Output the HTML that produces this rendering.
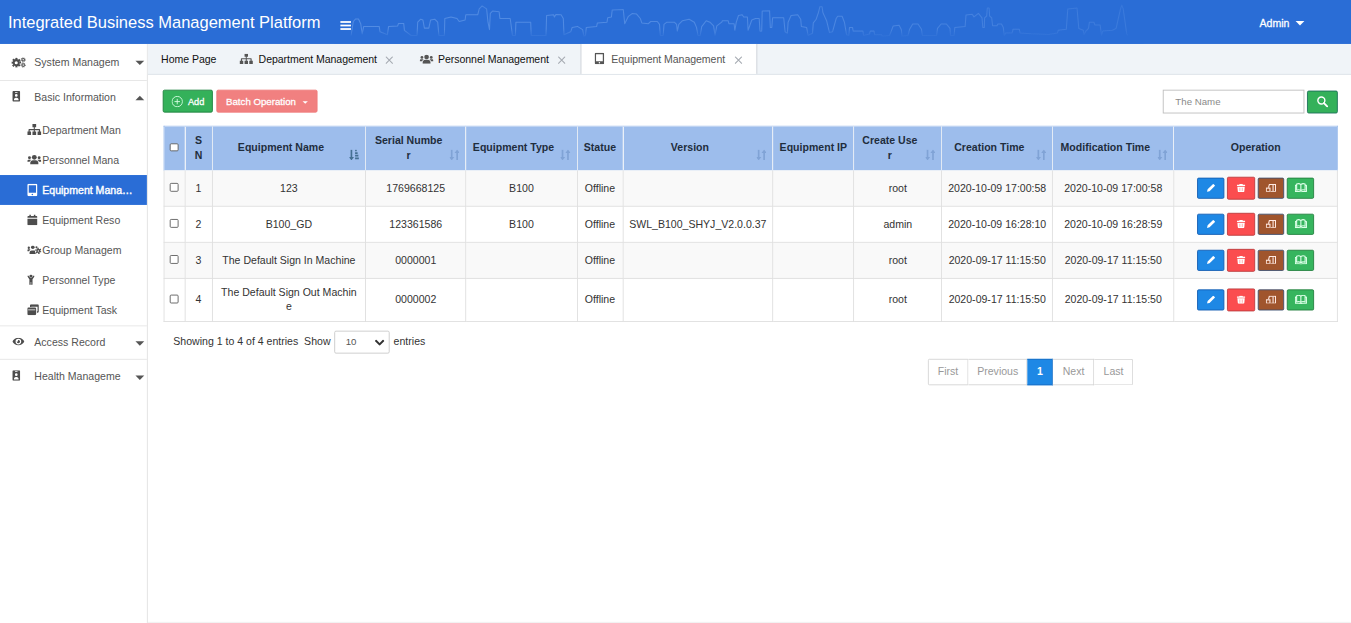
<!DOCTYPE html>
<html>
<head>
<meta charset="utf-8">
<title>Integrated Business Management Platform</title>
<style>
*{box-sizing:border-box;margin:0;padding:0}
html,body{width:1351px;height:623px;overflow:hidden;background:#fff}
#root{position:absolute;left:0;top:0;width:1536px;height:709px;transform:scale(0.87956);transform-origin:0 0;font-family:"Liberation Sans",sans-serif;font-size:12px;color:#333;overflow:hidden;background:#fff}
#hdr{position:absolute;left:0;top:0;width:1536px;height:50px;background:#2a6dd6;overflow:hidden}
#hdr .title{position:absolute;left:9px;top:13.5px;font-size:18.75px;color:#fff;line-height:24px;white-space:nowrap}
#hdr .burger{position:absolute;left:387px;top:24px;width:12px}
#hdr .burger i{display:block;height:2.4px;background:#fff;margin-bottom:1.5px;width:12px}
#hdr .admin{position:absolute;left:1432px;top:18.8px;color:#fff;font-size:12px;line-height:16px;-webkit-text-stroke:0.3px #fff}
#hdr .caret{position:absolute;left:1473px;top:24.2px;width:0;height:0;border-left:5.4px solid transparent;border-right:5.4px solid transparent;border-top:5px solid #fff}
#side{position:absolute;left:0;top:50px;width:168px;height:659px;background:#fff;border-right:1px solid #e0e0e0}
.m1{position:absolute;left:0;width:167px;height:41px;border-bottom:1px solid #e4e4e4;color:#555}
.m1 span{position:absolute;left:39px;top:13px;line-height:16px;white-space:nowrap;font-size:12px}
.m1 svg{position:absolute;left:13px;top:13px}
.m1 b.c{position:absolute;left:154px;width:0;height:0;border-left:5px solid transparent;border-right:5px solid transparent}
.m1 b.dn{top:19px;border-top:5.5px solid #555}
.m1 b.up{top:17px;border-bottom:5.5px solid #555}
.m2{position:absolute;left:0;width:167px;height:34px;color:#555}
.m2 span{position:absolute;left:48px;top:10px;line-height:16px;white-space:nowrap;font-size:12px}
.m2 svg{position:absolute;left:30px;top:10px}
.ic{position:absolute;overflow:visible;z-index:3}
.m2.act{background:#2a6dd6;color:#fff;height:34.3px;-webkit-text-stroke:0.45px #fff}
#tabs{position:absolute;left:168px;top:50px;width:1368px;height:35px;background:#f0f4f8;border-bottom:1px solid #dde2e8}
.tab{position:absolute;top:0;height:34px;font-size:12px;color:#111;white-space:nowrap}
.tt{letter-spacing:-0.07px;position:absolute;top:10.3px;line-height:16px;font-size:12px;color:#111;white-space:nowrap;z-index:3}
.tab svg{position:absolute}
.tab.on{background:#fff;border-left:1px solid #c6ccd4;border-right:1px solid #c6ccd4;height:34px;color:#555}
.btn{position:absolute;border-radius:2px;-webkit-text-stroke:0.3px #fff;color:#fff;white-space:nowrap}
table{position:absolute;left:186px;top:143px;width:1335px;border-collapse:collapse;table-layout:fixed;font-size:12px}
th,td{border:1px solid #dedede;text-align:center;vertical-align:middle;padding:0 4px;line-height:17.14px;color:#333;overflow:hidden;white-space:nowrap}
th{padding-top:0.7px;background:#9dbdec;font-weight:bold;color:#1f2d3d;height:50.4px;position:relative;border-color:#dde6f3;border-top-color:#9dbdec}
td{height:41px}
th:first-child{border-left-color:#9dbdec}
th:last-child{border-right-color:#9dbdec}
tr.o td{background:#f9f9f9}
tr.e td{background:#fff}
.cb{display:inline-block;width:9.8px;height:9.8px;border:1px solid #5a5a5a;border-radius:1.6px;background:#fff;vertical-align:middle;position:relative;top:-1.8px;left:-0.4px}
.srt{position:absolute;right:6.8px;bottom:11px;width:11.3px;height:12.4px}
.ops{display:flex;justify-content:center;align-items:center;gap:3.3px;position:relative;top:-0.4px}
.ob{display:block;width:30px;height:23.5px;border-radius:1.8px;position:relative;border:1px solid transparent;flex:none}
.ob svg{position:absolute;left:50%;top:50%}
#info{position:absolute;left:197px;top:380px;font-size:12px;color:#333;line-height:16px;white-space:pre}
#sel{position:absolute;left:380px;top:376.4px;width:63px;height:26px;border:1px solid #c8c8c8;border-radius:2px;background:#fff}
#sel span{position:absolute;left:12px;top:4.4px;font-size:11px;color:#555;line-height:13px}
#ent2{position:absolute;left:447.5px;top:380px;font-size:12px;color:#333;line-height:16px}
#pg{position:absolute;left:1055px;top:408px;height:29.5px;display:flex;font-size:12px;color:#999}
#pg div{height:29.5px;border:1px solid #d4d4d4;border-left:none;line-height:27.5px;text-align:center;background:#fff}
#pg div:first-child{border-left:1px solid #d4d4d4;border-radius:1.5px 0 0 1.5px}
#pg div:last-child{border-radius:0 1.5px 1.5px 0}
#pg div.on{background:#1e88e5;border-color:#1a6fc4;color:#fff;font-weight:bold}
</style>
</head>
<body>
<div id="root">
<svg width="0" height="0" style="position:absolute">
<defs>
<symbol id="i-cogs" viewBox="0 0 16.4 11.8">
  <g fill="none" stroke="currentColor">
    <circle cx="5.4" cy="6.2" r="2.9" stroke-width="2.3"/>
    <circle cx="5.4" cy="6.2" r="4.6" stroke-width="1.8" stroke-dasharray="2.2 1.413" transform="rotate(-18 5.4 6.2)"/>
    <circle cx="13.2" cy="2.9" r="1.45" stroke-width="1.15"/>
    <circle cx="13.2" cy="2.9" r="2.4" stroke-width="1" stroke-dasharray="0.95 0.935"/>
    <circle cx="13.2" cy="8.9" r="1.45" stroke-width="1.15"/>
    <circle cx="13.2" cy="8.9" r="2.4" stroke-width="1" stroke-dasharray="0.95 0.935"/>
  </g>
</symbol>
<symbol id="i-badge" viewBox="0 0 9 12">
  <path fill="currentColor" fill-rule="evenodd" d="M1.3 0h6.4a1.3 1.3 0 0 1 1.3 1.3v9.4a1.3 1.3 0 0 1-1.3 1.3h-6.4a1.3 1.3 0 0 1-1.3-1.3v-9.4a1.3 1.3 0 0 1 1.3-1.3zM3.1 1.1v0.9h2.8v-0.9zM4.5 3.5a1.55 1.55 0 1 0 0 3.1a1.55 1.55 0 0 0 0-3.1zM1.9 10.4h5.2v-0.7c0-1.3-1-2.2-2.1-2.2h-1c-1.1 0-2.1 0.9-2.1 2.2z"/>
</symbol>
<symbol id="i-sitemap" viewBox="0 0 16 12.6">
  <path fill="currentColor" d="M5.9 0h4.2v3.7h-1.5v1.9h5.2a0.8 0.8 0 0 1 0.8 0.8v2.2h1.4v4h-4.3v-4h1.5v-1.6h-4.6v1.6h1.5v4h-4.2v-4h1.5v-1.6h-4.6v1.6h1.5v4h-4.3v-4h1.4v-2.2a0.8 0.8 0 0 1 0.8-0.8h5.2v-1.9h-1.5z"/>
</symbol>
<symbol id="i-users" viewBox="0 0 16 11">
  <g fill="currentColor">
    <circle cx="8" cy="2.9" r="2.75"/>
    <path d="M3.4 11v-1.6c0-1.9 1.5-3.1 3-3.1h3.2c1.5 0 3 1.2 3 3.1v1.6z"/>
    <circle cx="2.5" cy="3.4" r="1.65"/>
    <circle cx="13.5" cy="3.4" r="1.65"/>
    <path d="M0 7.9v-0.8c0-1 0.8-1.6 1.6-1.6h1.7c0.5 0 0.9 0.2 1.2 0.5c-1 0.5-1.6 1.2-1.8 1.9z"/>
    <path d="M16 7.9v-0.8c0-1-0.8-1.6-1.6-1.6h-1.7c-0.5 0-0.9 0.2-1.2 0.5c1 0.5 1.6 1.2 1.8 1.9z"/>
  </g>
</symbol>
<symbol id="i-tablet" viewBox="0 0 11.6 14.1">
  <path fill="currentColor" fill-rule="evenodd" d="M1.6 0h8.4a1.6 1.6 0 0 1 1.6 1.6v10.9a1.6 1.6 0 0 1-1.6 1.6h-8.4a1.6 1.6 0 0 1-1.6-1.6v-10.9a1.6 1.6 0 0 1 1.6-1.6zM1.7 1.7v8.5h8.2v-8.5zM5.8 11.2a0.9 0.9 0 1 0 0 1.8a0.9 0.9 0 0 0 0-1.8z"/>
</symbol>
<symbol id="i-cal" viewBox="0 0 11.6 12.2">
  <path fill="currentColor" d="M2.4 0h1.7v1.6h3.4v-1.6h1.7v1.6h1.3a1.1 1.1 0 0 1 1.1 1.1v1h-11.6v-1a1.1 1.1 0 0 1 1.1-1.1h1.3zM0 4.6h11.6v6.5a1.1 1.1 0 0 1-1.1 1.1h-9.400000000000001a1.1 1.1 0 0 1-1.1-1.1z"/>
</symbol>
<symbol id="i-ucog" viewBox="0 0 16 9.8">
  <g fill="currentColor">
    <circle cx="6.3" cy="2.1" r="2.05"/>
    <path d="M2.6 9.8v-1.5c0-1.6 1.2-2.6 2.5-2.6h2.4c0.6 0 1.1 0.2 1.5 0.5c-0.4 1.2-0.1 2.6 1 3.6z"/>
    <circle cx="1.7" cy="2.7" r="1.35"/>
    <path d="M0 6.7v-0.9c0-0.8 0.6-1.3 1.3-1.3h1.2c0.4 0 0.7 0.2 1 0.4c-0.8 0.4-1.3 1-1.5 1.8z"/>
    <circle cx="10.5" cy="2.2" r="1.2"/>
  </g>
  <g fill="none" stroke="currentColor">
    <circle cx="12.6" cy="6.3" r="1.6" stroke-width="1.6"/>
    <circle cx="12.6" cy="6.3" r="2.9" stroke-width="1.4" stroke-dasharray="1.6 1.437"/>
  </g>
</symbol>
<symbol id="i-child" viewBox="0 0 8.4 12.3">
  <g fill="currentColor">
    <circle cx="4.2" cy="1.75" r="1.75"/>
    <path d="M0.2 1.7a0.8 0.8 0 0 1 1.2-0.2l2 2.4h1.6l2-2.4a0.8 0.8 0 0 1 1.2 1l-2.2 2.9v6.1a0.8 0.8 0 0 1-1.5 0v-3h-0.6v3a0.8 0.8 0 0 1-1.5 0v-6.1l-2.2-2.9a0.8 0.8 0 0 1 0-0.8z"/>
  </g>
</symbol>
<symbol id="i-restore" viewBox="0 0 13.2 12.4">
  <path fill="currentColor" fill-rule="evenodd" d="M4.4 0h7.5a1.3 1.3 0 0 1 1.3 1.3v6.900000000000001a1.3 1.3 0 0 1-1.3 1.3h-0.9v-1.5h0.7v-5.3h-7.1v0.2h-1.5v-1.6a1.3 1.3 0 0 1 1.3-1.3zM1.3 3.6h7.5a1.3 1.3 0 0 1 1.3 1.3v6.2a1.3 1.3 0 0 1-1.3 1.3h-7.5a1.3 1.3 0 0 1-1.3-1.3v-6.2a1.3 1.3 0 0 1 1.3-1.3zM1 5.9v0.9h8.1v-0.9z"/>
</symbol>
<symbol id="i-eye" viewBox="0 0 13.8 8.8">
  <path fill="currentColor" fill-rule="evenodd" d="M0 4.4c1.5-2.7 4-4.4 6.9-4.4s5.4 1.7 6.900000000000001 4.4c-1.5 2.7-4 4.4-6.9 4.4s-5.4-1.7-6.9-4.4zM6.9 1.2a3.2 3.2 0 1 0 0 6.4a3.2 3.2 0 0 0 0-6.4zM6.9 2.5a1.9 1.9 0 1 1-1.9 1.9c0.9 0.3 1.7-0.5 1.4-1.700000000000001c0.15-0.1 0.3-0.2 0.5-0.2z"/>
</symbol>
<symbol id="i-sort" viewBox="0 0 11.3 12.4">
  <path fill="currentColor" d="M1.6 0h1.9v8.4h2l-2.95 4l-2.95-4h2zM7.8 12.4h1.9v-8.4h2l-2.95-4l-2.95 4h2z"/>
</symbol>
<symbol id="i-sorta" viewBox="0 0 11.3 12.4">
  <path fill="currentColor" d="M1.6 0h1.9v8.4h2l-2.95 4l-2.95-4h2zM6.7 0h1.9v2h-1.9zM6.7 3h2.9v2h-2.9zM6.7 6h3.8v2h-3.8zM6.7 9h4.6v2h-4.6z"/>
</symbol>
<symbol id="i-pencil" viewBox="0 0 9.6 9.4">
  <path fill="#fff" d="M0.3 9.1l0.7-2.9l5.9-5.8a0.7 0.7 0 0 1 1 0l1.2 1.2a0.7 0.7 0 0 1 0 1l-5.9 5.8z"/>
</symbol>
<symbol id="i-trash" viewBox="0 0 10 9.4">
  <path fill="#fff" d="M3.4 0h3.2l0.5 1h2.5a0.4 0.4 0 0 1 0.4 0.4v1h-10v-1a0.4 0.4 0 0 1 0.4-0.4h2.5zM0.8 3.2h8.4l-0.5 5.3a1 1 0 0 1-1 0.9h-5.4a1 1 0 0 1-1-0.9z"/>
  <path fill="#ffb3b3" d="M3 4.4h1.2v3.8h-1.2zM5.8 4.4h1.2v3.8h-1.2z"/>
</symbol>
<symbol id="i-plap" viewBox="0 0 11.8 9.4">
  <g fill="none" stroke="#ffe9e2" stroke-width="1.25">
    <path d="M3.2 4.4l1-3.7h7v8.1h-5.6"/>
    <path d="M8.4 1.4v7.4"/>
    <rect x="0.65" y="4.9" width="4.2" height="3.9" fill="#a0552d"/>
  </g>
</symbol>
<symbol id="i-book" viewBox="0 0 14 10.6">
  <g fill="none" stroke="#dcffe8" stroke-width="1.25" stroke-linejoin="round">
    <path d="M2.2 1.3c1.8-0.9 3.6-0.6 4.8 0.5v7c-1.2-1.1-3-1.4-4.8-0.5zM11.8 1.3c-1.8-0.9-3.6-0.6-4.8 0.5v7c1.2-1.1 3-1.4 4.8-0.5z"/>
    <path d="M2.2 2.8h-1.5v7h4.3c0.8 0 1.5 0.3 2 0.7c0.5-0.4 1.2-0.7 2-0.7h4.3v-7h-1.5"/>
  </g>
</symbol>
<symbol id="i-plusc" viewBox="0 0 13 13">
  <g fill="none" stroke="#d9ffe6" stroke-width="1">
    <circle cx="6.5" cy="6.5" r="5.9"/>
    <path d="M6.5 3.4v6.2M3.4 6.5h6.2"/>
  </g>
</symbol>
<symbol id="i-search" viewBox="0 0 14 14">
  <g fill="none" stroke="#fff">
    <circle cx="5.7" cy="5.7" r="4.3" stroke-width="1.7"/>
    <path d="M8.9 8.9l4.2 4.2" stroke-width="2.3" stroke-linecap="round"/>
  </g>
</symbol>
<symbol id="i-x" viewBox="0 0 9 9">
  <path fill="none" stroke="#a6abb2" stroke-width="1.25" d="M0.5 0.5l8 8M8.5 0.5l-8 8"/>
</symbol>
<symbol id="i-chev" viewBox="0 0 10 6.4">
  <path fill="none" stroke="#333" stroke-width="2" d="M0.8 0.8l4.2 4.2l4.2-4.2"/>
</symbol>
</defs>
</svg>
<div id="hdr">
  <svg style="position:absolute;left:0;top:0;width:1536px;height:50px" viewBox="0 0 1351 43.978" preserveAspectRatio="none">
    <defs><linearGradient id="skg" x1="340" x2="1135" y1="0" y2="0" gradientUnits="userSpaceOnUse"><stop offset="0" stop-color="#79aaf0" stop-opacity=".5"/><stop offset=".55" stop-color="#79aaf0" stop-opacity=".45"/><stop offset=".8" stop-color="#79aaf0" stop-opacity=".32"/><stop offset="1" stop-color="#79aaf0" stop-opacity=".2"/></linearGradient></defs>
    <path fill="none" stroke="url(#skg)" stroke-width="1.05" stroke-linejoin="round" d="M351.1 35.5 L353.3 21.5 L355.5 19 L358.5 19 L360.7 23.7 L362.2 34 L363.7 26.4 L379.2 26.4 L380 31.8 L387.4 34.8 L388.6 26.4 L397.7 25.9 L398.5 23.4 L403.7 23.4 L404.4 30.3 L411.1 35.5 L417 35.5 L417.7 22.2 L420.7 19.2 L422.9 20 L424.4 28.1 L428.8 28.1 L430.6 20 L434.7 19.2 L437.7 22.2 L438.9 35.5 L444.4 35.5 L444.8 18.5 L451 17 L457 18.5 L459.2 21.5 L465.1 20 L465.8 14.8 L477.7 14.8 L479.2 8.9 L482.1 5.9 L486.6 8.9 L488 22.2 L489.5 29.6 L490.3 13.3 L492.5 11.1 L499.1 11.8 L499.9 18.5 L510.2 18.5 L512.5 35.5 L515.4 35.5 L515.9 22.2 L530.7 22.2 L531.2 35.5 L546 35.5 L546.6 15.5 L553.7 14.8 L554.4 17 L555.9 14.5 L561.1 14.8 L563.3 18.5 L564 34.8 L570.7 31.8 L572.2 27.4 L577.4 26.4 L582.6 29.6 L584 36.3 L585.5 35.5 L586.3 27.4 L596.6 26.6 L597.4 22.9 L607 22.2 L607.7 17.8 L611.4 17 L612.2 10.1 L623.3 9.6 L624.7 23.7 L628.4 16.3 L632.1 13.6 L636.6 14.1 L640.3 18.5 L641.8 22.9 L648.4 23.7 L650.7 21.5 L657.3 21.5 L659.5 24.4 L660.3 35.5 L663.2 35.5 L664 24.4 L666.9 22.2 L674.3 22.2 L676.6 24.4 L677.3 31.1 L678.8 24.4 L682.5 20.7 L689.1 19.2 L694.3 22.2 L696.5 27.4 L698 35.5 L700.2 35.5 L701.7 26.6 L706.2 20.7 L709.9 22.2 L713.6 25.9 L715 35.5 L716.8 25.9 L721.7 22.2 L722.4 20.7 L728.1 20.7 L728.9 23.7 L734.1 23.7 L734.8 30.3 L736.3 22.2 L738.5 15.5 L742.2 14.8 L743.7 17 L747.4 17 L748.1 30.3 L751.8 20 L755.5 18.5 L759.2 18.5 L760 31.1 L761.7 31.1 L762.2 11.1 L769.6 10.7 L770.3 27.4 L771.8 27.4 L772.6 17.8 L783.7 17.8 L785.1 31.8 L787.4 33.3 L788.1 22.2 L791.1 15.5 L797.7 14.8 L800.7 19.2 L801.4 26.6 L806.6 27.4 L808.1 35.5 L812.5 33.3 L813.3 22.9 L816.2 19.2 L818.4 12.6 L819.9 6.7 L822.1 6.7 L822.9 12.6 L826.6 20.7 L829.5 32.6 L832.5 31.8 L836.2 18.5 L837.7 16.3 L842.1 16.3 L844.4 22.2 L846.6 34.8 L848.8 35.5 L849.5 27.4 L852.5 27.4 L853.2 31.1 L862.9 31.1 L863.6 35.5 L869.5 34 L870.3 31.1 L874 31.1 L874.7 34.8 L881.4 34.8 L882.8 36.3 L889.5 35.5 L891 31.8 L893.2 25.9 L899.1 25.2 L901.3 29.6 L902.1 36.3 L908 35.5 L909.5 29.6 L912.7 24 L918 24 L921.5 29.3 L922.4 35.5 L936.6 35.5 L937.5 28.4 L941.1 24 L946.4 24 L950 28.4 L950.5 35.5 L954.1 35.5 L954.8 27.5 L965.1 26.6 L966 15.1 L972.2 14.2 L974 16.9 L978.4 13.3 L982 17.8 L982.8 27.5 L984.3 27.5 L984.6 17.8 L986.7 16 L987.3 8 L989.1 8 L989.6 16 L991.7 17.8 L992.6 25.8 L997 25.8 L997.9 24 L1001.5 24 L1003.3 27.5 L1004.2 35.5 L1005.9 32.9 L1012.2 32.9 L1013 29.3 L1019.3 29.3 L1020.1 32.9 L1030.8 33.8 L1048.6 34.6 L1057.5 32.9 L1058.3 30.2 L1066.3 29.3 L1067.8 8.9 L1077 8 L1078.8 28.4 L1083.2 30.2 L1084.1 34.6 L1085.9 31.1 L1088.5 28.4 L1089.4 22.2 L1093.9 22.2 L1094.8 24.9 L1100.1 24.9 L1101.5 35.5 L1102.8 31.1 L1112.5 30.2 L1116.1 28.4 L1120.5 8.9 L1121.8 5.3 L1123.2 8.9 L1126.7 33.8 L1127.6 35.5"/>
  </svg>
  <div style="position:absolute;left:380px;top:0;width:920px;height:50px;background:linear-gradient(to bottom,rgba(42,109,214,.5) 0,rgba(42,109,214,0) 30%,rgba(42,109,214,0) 66%,rgba(42,109,214,.9) 84%)"></div>
  <div class="title">Integrated Business Management Platform</div>
  <div class="burger"><i></i><i></i><i></i></div>
  <div class="admin">Admin</div>
  <div class="caret"></div>
</div>

<div id="side">
  <svg class="ic" style="left:13.4px;top:14.8px;width:16.6px;height:12px;color:#4d4d4d"><use href="#i-cogs"/></svg>
  <svg class="ic" style="left:14px;top:53.4px;width:9px;height:13px;color:#4d4d4d"><use href="#i-badge"/></svg>
  <svg class="ic" style="left:30.6px;top:91.3px;width:16px;height:12.6px;color:#4d4d4d"><use href="#i-sitemap"/></svg>
  <svg class="ic" style="left:30.6px;top:126.3px;width:16px;height:11px;color:#4d4d4d"><use href="#i-users"/></svg>
  <svg class="ic" style="left:30.6px;top:159.2px;width:11.6px;height:14.1px;color:#fff"><use href="#i-tablet"/></svg>
  <svg class="ic" style="left:30.6px;top:193.9px;width:11.6px;height:12.2px;color:#4d4d4d"><use href="#i-cal"/></svg>
  <svg class="ic" style="left:30.6px;top:229px;width:16px;height:9.8px;color:#4d4d4d"><use href="#i-ucog"/></svg>
  <svg class="ic" style="left:31.3px;top:261.9px;width:8.4px;height:12.3px;color:#4d4d4d"><use href="#i-child"/></svg>
  <svg class="ic" style="left:30.6px;top:296.3px;width:13.2px;height:12.4px;color:#4d4d4d"><use href="#i-restore"/></svg>
  <svg class="ic" style="left:13.8px;top:334px;width:13.8px;height:8.8px;color:#4d4d4d"><use href="#i-eye"/></svg>
  <svg class="ic" style="left:13.8px;top:371.2px;width:9px;height:12px;color:#4d4d4d"><use href="#i-badge"/></svg>
  <div class="m1" style="top:0;height:42px"><span>System Managem</span><b class="c dn"></b></div>
  <div class="m1" style="top:42px;height:38px;border-bottom:none"><span style="top:11px">Basic Information</span><b class="c up"></b></div>
  <div class="m2" style="top:81px"><span style="top:9px">Department Man</span></div>
  <div class="m2" style="top:115px"><span>Personnel Mana</span></div>
  <div class="m2 act" style="top:149.2px"><span>Equipment Mana…</span></div>
  <div class="m2" style="top:183.3px"><span>Equipment Reso</span></div>
  <div class="m2" style="top:217.4px"><span>Group Managem</span></div>
  <div class="m2" style="top:251.5px"><span style="top:9px">Personnel Type</span></div>
  <div class="m2" style="top:285.6px"><span style="top:9px">Equipment Task</span></div>
  <div class="m1" style="top:320px;border-top:1px solid #e4e4e4;height:39px"><span style="top:10px">Access Record</span><b class="c dn" style="top:16.5px"></b></div>
  <div class="m1" style="top:359px;border-bottom:none"><span style="top:11px">Health Manageme</span><b class="c dn" style="top:17.5px"></b></div>
</div>

<div id="tabs">
  <div class="tab on" style="left:492px;width:200.6px"></div>
  <span class="tt" style="left:15.2px">Home Page</span>
  <svg class="ic" style="left:104.1px;top:11.3px;width:16px;height:11.7px;color:#555"><use href="#i-sitemap"/></svg>
  <span class="tt" style="left:126px">Department Management</span>
  <svg class="ic" style="left:270.3px;top:13.8px;width:9.2px;height:8.8px"><use href="#i-x"/></svg>
  <svg class="ic" style="left:308.5px;top:11.8px;width:16px;height:10.6px;color:#555"><use href="#i-users"/></svg>
  <span class="tt" style="left:330px">Personnel Management</span>
  <svg class="ic" style="left:466.4px;top:13.8px;width:9.2px;height:8.8px"><use href="#i-x"/></svg>
  <svg class="ic" style="left:507.8px;top:10.4px;width:11px;height:13.2px;color:#555"><use href="#i-tablet"/></svg>
  <span class="tt" style="left:527px;color:#555">Equipment Management</span>
  <svg class="ic" style="left:666.9px;top:13.8px;width:9.2px;height:8.8px"><use href="#i-x"/></svg>
</div>

<div class="btn" style="left:185.3px;top:102.3px;width:56.8px;height:25.8px;background:#34b15a;border:1px solid #1c7f3c"><svg class="ic" style="left:9px;top:5.8px;width:13px;height:13px"><use href="#i-plusc"/></svg><span style="position:absolute;left:27.4px;top:6px;font-size:10.5px;line-height:12px">Add</span></div>
<div class="btn" style="left:245.7px;top:102.3px;width:115.7px;height:25.8px;background:#f18080;border:1px solid #ef7a7a"><span style="position:absolute;left:10.3px;top:5.5px;font-size:11px;line-height:13px">Batch Operation</span><b style="position:absolute;left:97.3px;top:12px;width:0;height:0;border-left:3.2px solid transparent;border-right:3.2px solid transparent;border-top:3.8px solid #fff"></b></div>

<div style="position:absolute;left:1322.3px;top:102.2px;width:160.3px;height:27px;border:1px solid #bdbdbd;background:#fff"><span style="position:absolute;left:13px;top:6px;font-size:11px;color:#8a8a8a;line-height:13px">The Name</span></div>
<div class="btn" style="left:1486px;top:103px;width:35.2px;height:26px;background:#34b15a;border:1px solid #1b6e58"><svg class="ic" style="left:9.6px;top:5.4px;width:13px;height:13px"><use href="#i-search"/></svg></div>

<table>
<colgroup><col style="width:23.7px"><col style="width:31px"><col style="width:174.5px"><col style="width:113.9px"><col style="width:126.5px"><col style="width:52px"><col style="width:170.6px"><col style="width:92.1px"><col style="width:99.9px"><col style="width:126.3px"><col style="width:137.5px"><col style="width:186.5px"></colgroup>
<tr>
<th><i class="cb"></i></th><th>S<br>N</th><th><span style="position:relative;left:-9px">Equipment Name</span><svg class="srt" style="color:#3e6a8c;opacity:.92"><use href="#i-sorta"/></svg></th><th><span style="position:relative;left:-8px">Serial Numbe<br>r</span><svg class="srt" style="color:#6e93c8;opacity:.6"><use href="#i-sort"/></svg></th><th><span style="position:relative;left:-9px">Equipment Type</span><svg class="srt" style="color:#6e93c8;opacity:.6"><use href="#i-sort"/></svg></th><th>Statue</th><th><span style="position:relative;left:-9px">Version</span><svg class="srt" style="color:#6e93c8;opacity:.6"><use href="#i-sort"/></svg></th><th>Equipment IP</th><th><span style="position:relative;left:-9px">Create Use<br>r</span><svg class="srt" style="color:#6e93c8;opacity:.6"><use href="#i-sort"/></svg></th><th><span style="position:relative;left:-9px">Creation Time</span><svg class="srt" style="color:#6e93c8;opacity:.6"><use href="#i-sort"/></svg></th><th><span style="position:relative;left:-9px">Modification Time</span><svg class="srt" style="color:#6e93c8;opacity:.6"><use href="#i-sort"/></svg></th><th>Operation</th>
</tr>
<tr class="o"><td><i class="cb"></i></td><td>1</td><td>123</td><td>1769668125</td><td>B100</td><td>Offline</td><td></td><td></td><td>root</td><td>2020-10-09 17:00:58</td><td>2020-10-09 17:00:58</td><td><div class="ops"><i class="ob" style="background:#1e88e5;border-color:#155db2;width:30.5px"><svg style="width:9.6px;height:9.4px;margin:-4.8px 0 0 -4.2px"><use href="#i-pencil"/></svg></i><i class="ob" style="background:#fb4d4f;border-color:#bb3a3c;width:32.3px;height:25.8px"><svg style="width:10px;height:9.4px;margin:-4.5px 0 0 -4.8px"><use href="#i-trash"/></svg></i><i class="ob" style="background:#a0552d;border-color:#3d5070;width:29.7px"><svg style="width:11.8px;height:9.4px;margin:-4.9px 0 0 -6px"><use href="#i-plap"/></svg></i><i class="ob" style="background:#36b55e;border-color:#23803f;width:30.9px"><svg style="width:14px;height:10.6px;margin:-5.9px 0 0 -7px"><use href="#i-book"/></svg></i></div></td></tr>
<tr class="e"><td><i class="cb"></i></td><td>2</td><td>B100_GD</td><td>123361586</td><td>B100</td><td>Offline</td><td style="padding:0">SWL_B100_SHYJ_V2.0.0.37</td><td></td><td>admin</td><td>2020-10-09 16:28:10</td><td>2020-10-09 16:28:59</td><td><div class="ops"><i class="ob" style="background:#1e88e5;border-color:#155db2;width:30.5px"><svg style="width:9.6px;height:9.4px;margin:-4.8px 0 0 -4.2px"><use href="#i-pencil"/></svg></i><i class="ob" style="background:#fb4d4f;border-color:#bb3a3c;width:32.3px;height:25.8px"><svg style="width:10px;height:9.4px;margin:-4.5px 0 0 -4.8px"><use href="#i-trash"/></svg></i><i class="ob" style="background:#a0552d;border-color:#3d5070;width:29.7px"><svg style="width:11.8px;height:9.4px;margin:-4.9px 0 0 -6px"><use href="#i-plap"/></svg></i><i class="ob" style="background:#36b55e;border-color:#23803f;width:30.9px"><svg style="width:14px;height:10.6px;margin:-5.9px 0 0 -7px"><use href="#i-book"/></svg></i></div></td></tr>
<tr class="o"><td><i class="cb"></i></td><td>3</td><td>The Default Sign In Machine</td><td>0000001</td><td></td><td>Offline</td><td></td><td></td><td>root</td><td>2020-09-17 11:15:50</td><td>2020-09-17 11:15:50</td><td><div class="ops"><i class="ob" style="background:#1e88e5;border-color:#155db2;width:30.5px"><svg style="width:9.6px;height:9.4px;margin:-4.8px 0 0 -4.2px"><use href="#i-pencil"/></svg></i><i class="ob" style="background:#fb4d4f;border-color:#bb3a3c;width:32.3px;height:25.8px"><svg style="width:10px;height:9.4px;margin:-4.5px 0 0 -4.8px"><use href="#i-trash"/></svg></i><i class="ob" style="background:#a0552d;border-color:#3d5070;width:29.7px"><svg style="width:11.8px;height:9.4px;margin:-4.9px 0 0 -6px"><use href="#i-plap"/></svg></i><i class="ob" style="background:#36b55e;border-color:#23803f;width:30.9px"><svg style="width:14px;height:10.6px;margin:-5.9px 0 0 -7px"><use href="#i-book"/></svg></i></div></td></tr>
<tr class="e"><td style="height:49px"><i class="cb"></i></td><td>4</td><td>The Default Sign Out Machin<br>e</td><td>0000002</td><td></td><td>Offline</td><td></td><td></td><td>root</td><td>2020-09-17 11:15:50</td><td>2020-09-17 11:15:50</td><td><div class="ops"><i class="ob" style="background:#1e88e5;border-color:#155db2;width:30.5px"><svg style="width:9.6px;height:9.4px;margin:-4.8px 0 0 -4.2px"><use href="#i-pencil"/></svg></i><i class="ob" style="background:#fb4d4f;border-color:#bb3a3c;width:32.3px;height:25.8px"><svg style="width:10px;height:9.4px;margin:-4.5px 0 0 -4.8px"><use href="#i-trash"/></svg></i><i class="ob" style="background:#a0552d;border-color:#3d5070;width:29.7px"><svg style="width:11.8px;height:9.4px;margin:-4.9px 0 0 -6px"><use href="#i-plap"/></svg></i><i class="ob" style="background:#36b55e;border-color:#23803f;width:30.9px"><svg style="width:14px;height:10.6px;margin:-5.9px 0 0 -7px"><use href="#i-book"/></svg></i></div></td></tr>
</table>

<div style="position:absolute;left:168px;top:707px;width:1368px;height:1.2px;background:#ededed"></div>
<div id="info">Showing 1 to 4 of 4 entries  Show</div>
<div id="sel"><span>10</span><svg class="ic" style="left:45.3px;top:8.6px;width:11.2px;height:7.2px"><use href="#i-chev"/></svg></div>
<div id="ent2">entries</div>
<div id="pg"><div style="width:45.6px">First</div><div style="width:67px;padding-left:1.5px">Previous</div><div class="on" style="width:29.4px;padding-left:1px">1</div><div style="width:47.2px;padding-left:1px">Next</div><div style="width:43.7px;padding-left:1px">Last</div></div>
</div>
</body>
</html>
